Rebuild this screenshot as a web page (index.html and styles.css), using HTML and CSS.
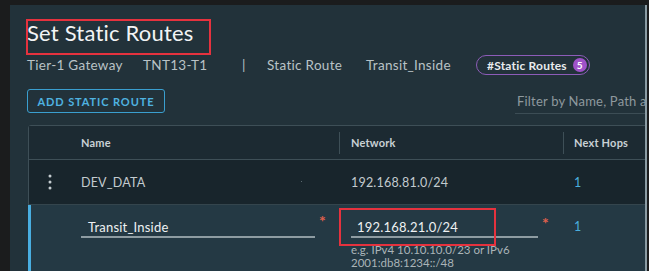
FILE: index.html
```html
<!DOCTYPE html>
<html>
<head>
<meta charset="utf-8">
<link rel="stylesheet" href="styles.css">
</head>
<body>
<div class="panel">
  <div class="title-wrap">
    <h1 class="title">Set Static Routes</h1>
    <span class="mark mark-title"></span>
  </div>
  <div class="crumbs">
    <span class="c1">Tier-1 Gateway</span>
    <span class="c2">TNT13-T1</span>
    <span class="c3">|</span>
    <span class="c4">Static Route</span>
    <span class="c5">Transit_Inside</span>
    <span class="pill">#Static Routes <span class="badge">5</span></span>
  </div>
  <div class="toolbar">
    <button class="btn">ADD STATIC ROUTE</button>
    <div class="filter">Filter by Name, Path and more</div>
  </div>
  <div class="table">
    <div class="row head">
      <div class="cell kebab"></div>
      <div class="cell name">Name</div>
      <div class="cell net"><span class="div"></span>Network</div>
      <div class="cell hops"><span class="div"></span>Next Hops</div>
    </div>
    <div class="row r1">
      <div class="cell kebab">
        <svg width="4" height="16" viewBox="0 0 4 16"><circle cx="2" cy="2" r="1.5" fill="#c5cdd1"/><circle cx="2" cy="8" r="1.5" fill="#c5cdd1"/><circle cx="2" cy="14" r="1.5" fill="#c5cdd1"/></svg>
      </div>
      <div class="cell name">DEV_DATA<span class="dot"></span></div>
      <div class="cell net">192.168.81.0/24</div>
      <div class="cell hops link">1</div>
    </div>
    <div class="row r2">
      <div class="cell kebab"></div>
      <div class="cell name edit">
        <div class="input in-name">Transit_Inside</div>
        <span class="req">*</span>
      </div>
      <div class="cell net edit">
        <div class="field">
          <div class="input in-net">192.168.21.0/24</div>
          <div class="help">e.g. IPv4 10.10.10.0/23 or IPv6<br>2001:db8:1234::/48</div>
          <span class="mark mark-net"></span>
        </div>
        <span class="req">*</span>
      </div>
      <div class="cell hops link">1</div>
    </div>
  </div>
</div>
</body>
</html>
```

FILE: styles.css
```css
html, body {
  margin: 0;
  padding: 0;
}
body {
  background: #1b1c1d;
  width: 649px;
  height: 271px;
  overflow: hidden;
  font-family: Lato, "Open Sans", sans-serif;
  padding: 5px 0 0 10px;
  box-sizing: border-box;
}
.panel {
  width: 618px;
  height: 266px;
  background: #22323a;
  border-right: 2px solid #8a9ba3;
  padding: 0 0 0 17px;
  box-sizing: content-box;
  overflow: hidden;
}
.title-wrap {
  position: relative;
  height: 47px;
}
.title {
  margin: 0;
  padding-top: 15px;
  font-weight: 400;
  font-size: 22px;
  line-height: 26px;
  color: #f2f4f5;
  letter-spacing: 0.2px;
}
.mark {
  position: absolute;
  border: 2px solid #e5323e;
  box-sizing: border-box;
}
.mark-title {
  left: -1px;
  top: 14px;
  width: 185px;
  height: 36px;
}
.crumbs {
  display: flex;
  align-items: center;
  height: 26px;
  font-size: 13.5px;
  letter-spacing: 0.3px;
  color: #b9c2c6;
}
.c1 { width: 116px; }
.c2 { width: 99px; }
.c3 { width: 25px; }
.c4 { width: 99px; }
.c5 { width: 110px; }
.pill {
  display: inline-flex;
  align-items: center;
  height: 20px;
  box-sizing: border-box;
  border: 1.5px solid #8d5cb8;
  border-radius: 10px;
  padding: 0 2px 0 10px;
  font-size: 12px;
  font-weight: 700;
  letter-spacing: 0.2px;
  color: #e8ecee;
  gap: 6px;
}
.badge {
  display: inline-flex;
  align-items: center;
  justify-content: center;
  width: 14px;
  height: 14px;
  border-radius: 50%;
  background: #9f52c9;
  color: #fff;
  font-size: 10px;
  font-weight: 700;
}
.toolbar {
  display: flex;
  align-items: center;
  justify-content: space-between;
  margin-top: 11px;
  height: 24px;
}
.btn {
  height: 24px;
  width: 138px;
  box-sizing: border-box;
  border: 1px solid #3a9fcf;
  border-radius: 3px;
  background: transparent;
  color: #4fb3e0;
  font-family: Lato, sans-serif;
  font-size: 11px;
  font-weight: 700;
  letter-spacing: 0.9px;
  padding: 0;
}
.filter {
  width: 130px;
  height: 24px;
  line-height: 22px;
  font-size: 13px;
  letter-spacing: 0.2px;
  color: #8e999e;
  white-space: nowrap;
  overflow: hidden;
  border-bottom: 1px solid #3c4d55;
  box-sizing: border-box;
  padding-left: 2px;
  margin-top: 2px;
}
.table {
  margin-top: 12px;
  margin-left: 1px;
  width: 680px;
  border: 1px solid #3e4f57;
  border-radius: 3px 0 0 0;
}
.row {
  display: grid;
  grid-template-columns: 40px 270px 224px 1fr;
}
.cell {
  position: relative;
  display: flex;
  align-items: center;
}
.head {
  height: 33px;
  background: #1c2a32;
  border-bottom: 1px solid #3e4f57;
  font-size: 11px;
  font-weight: 700;
  letter-spacing: 0.2px;
  color: #c9d1d5;
}
.head .div {
  position: absolute;
  left: 0;
  top: 6px;
  bottom: 5px;
  width: 1px;
  background: #3e4f57;
}
.name { padding-left: 12px; }
.net { padding-left: 12px; }
.hops { padding-left: 11px; }
.r1 {
  height: 44px;
  background: #18252c;
  border-bottom: 1px solid #34454d;
  font-size: 12.5px;
  letter-spacing: 0.2px;
  color: #c3cbcf;
}
.r1 .kebab { justify-content: center; padding-left: 1px; }
.r1 .dot {
  position: absolute;
  left: 232px;
  top: 21px;
  width: 1px;
  height: 1px;
  background: #5b6a70;
}
.link {
  color: #4aaede;
  font-size: 12.5px;
}
.r2 {
  height: 70px;
  background: #243944;
  border-left: 3px solid #49aee0;
  margin-left: -1px;
  align-items: start;
  grid-template-columns: 38px 270px 224px 1fr;
}
.r2 .cell { align-items: flex-start; }
.r2 .hops { padding-top: 14px; }
.input {
  height: 33px;
  box-sizing: border-box;
  border-bottom: 2px solid #8e9ca2;
  font-size: 13px;
  letter-spacing: 0.2px;
  color: #eef1f2;
  line-height: 20px;
  padding: 12px 0 0 7px;
}
.in-name {
  width: 234px;
}
.req {
  color: #e0604d;
  font-size: 16px;
  font-weight: 700;
  margin-left: 4px;
  margin-top: 9px;
  line-height: 14px;
}
.net.edit .req { margin-top: 11px; }
.field {
  position: relative;
  width: 187px;
}
.in-net {
  width: 187px;
  padding-left: 6px;
}
.help {
  font-size: 11.5px;
  line-height: 13px;
  color: #aab4b8;
  margin-top: 5px;
  white-space: nowrap;
}
.mark-net {
  left: -12px;
  top: 3px;
  width: 157px;
  height: 38px;
}
```
